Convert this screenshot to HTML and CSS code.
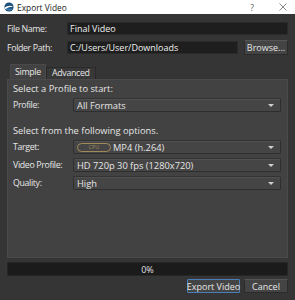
FILE: index.html
```html
<!DOCTYPE html>
<html>
<head>
<meta charset="utf-8">
<link rel="stylesheet" href="styles.css">
</head>
<body>
<div class="window">
  <div class="titlebar">
    <svg class="appicon" width="10" height="10" viewBox="0 0 10 10">
      <circle cx="5" cy="5" r="4.6" fill="#1d4f7a"/>
      <path d="M0.6 5.6 Q5 2.4 9.6 5 Q6 4.3 1.4 7.2 Z" fill="#ffffff"/>
      <path d="M1.4 7.2 Q5 5.7 8.9 7.2 Q5 10 1.4 7.2 Z" fill="#3a7fb8"/>
    </svg>
    <span class="title">Export Video</span>
    <span class="spacer"></span>
    <span class="help">?</span>
    <svg class="close" width="8" height="8" viewBox="0 0 8 8">
      <path d="M0.5 0.5 L7.5 7.5 M7.5 0.5 L0.5 7.5" stroke="#777" stroke-width="0.9"/>
    </svg>
  </div>
  <div class="content">
    <div class="row">
      <span class="label">File Name:</span>
      <div class="field">Final Video</div>
    </div>
    <div class="row row2">
      <span class="label">Folder Path:</span>
      <div class="field">C:/Users/User/Downloads</div>
      <div class="btn browse">Browse...</div>
    </div>
    <div class="tabs">
      <div class="tab active">Simple</div>
      <div class="tab">Advanced</div>
    </div>
    <div class="panel">
      <div class="heading">Select a Profile to start:</div>
      <div class="prow">
        <span class="plabel">Profile:</span>
        <div class="combo"><span class="ctext">All Formats</span><span class="arrow"></span></div>
      </div>
      <div class="heading heading2">Select from the following options.</div>
      <div class="prow">
        <span class="plabel">Target:</span>
        <div class="combo"><span class="badge">CPU</span><span class="ctext">MP4 (h.264)</span><span class="arrow"></span></div>
      </div>
      <div class="prow">
        <span class="plabel">Video Profile:</span>
        <div class="combo"><span class="ctext">HD 720p 30 fps (1280x720)</span><span class="arrow"></span></div>
      </div>
      <div class="prow">
        <span class="plabel">Quality:</span>
        <div class="combo"><span class="ctext">High</span><span class="arrow"></span></div>
      </div>
    </div>
    <div class="progress">0%</div>
    <div class="buttons">
      <div class="btn export">Export Video</div>
      <div class="btn cancel">Cancel</div>
    </div>
  </div>
</div>
</body>
</html>
```
FILE: styles.css
```css
* { box-sizing: border-box; }
html, body { margin: 0; padding: 0; }
body {
  width: 295px;
  height: 300px;
  background: #353535;
  font-family: "Open Sans", "Noto Sans", sans-serif;
  font-size: 9.3px;
  color: #e6e6e6;
  overflow: hidden;
  white-space: nowrap;
}
.window { width: 295px; height: 300px; display: flex; flex-direction: column; }
.titlebar {
  height: 15px;
  background: #ffffff;
  display: flex;
  align-items: center;
  padding: 0 8px 0 4px;
  color: #222;
  font-size: 8.4px;
}
.appicon { margin-right: 3px; }
.spacer { flex: 1; }
.help { color: #555; font-size: 8.5px; margin-right: 25px; }
.close { margin-right: 0; }
.content {
  flex: 1;
  display: flex;
  flex-direction: column;
  padding: 8px 7px 7px 7px;
}
.row { display: flex; align-items: center; height: 13px; }
.row2 { margin-top: 5px; height: 15px; }
.label { width: 60px; color: #e6e6e6; font-size: 8.8px; letter-spacing: -0.35px; }
.field {
  flex: 1;
  height: 13px;
  background: #1e1e1e;
  border: 1px solid #2a2a2a;
  padding: 0 2px;
  line-height: 11px;
  color: #f0f0f0;
  font-size: 9px;
}
.btn {
  height: 15px;
  border: 1px solid #2b2b2b;
  border-top-color: #555;
  background: #444;
  display: flex;
  align-items: center;
  justify-content: center;
  color: #e6e6e6;
  border-radius: 1px;
  font-size: 9px;
}
.browse { width: 44px; margin-left: 6px; }
.tabs { display: flex; align-items: flex-end; margin-top: 9px; padding-left: 3px; height: 15px; }
.tab {
  height: 12px;
  padding: 0 5px;
  background: #383838;
  border: 1px solid #2a2a2a;
  border-bottom: none;
  line-height: 11px;
  color: #e6e6e6;
  font-size: 8.8px;
  letter-spacing: -0.3px;
}
.tab.active {
  height: 15px;
  background: #424242;
  border-color: #4a4a4a;
  line-height: 14px;
  padding: 0 4px;
}
.panel {
  height: 179px;
  background: #424242;
  border: 1px solid #4a4a4a;
  padding: 3px 5px 0 5px;
  display: flex;
  flex-direction: column;
}
.heading { height: 12px; line-height: 12px; }
.heading2 { margin-top: 13px; }
.prow { display: flex; align-items: center; height: 14px; margin-top: 4px; }
.heading + .prow { margin-top: 3px; }
.plabel { width: 60px; font-size: 8.8px; letter-spacing: -0.35px; }
.combo {
  flex: 1;
  height: 14px;
  background: #454545;
  border: 1px solid #2e2e2e;
  border-top-color: #333;
  box-shadow: inset 0 1px 0 #505050;
  display: flex;
  align-items: center;
  padding: 0 6px 0 3px;
  border-radius: 2px;
  margin-right: 1px;
}
.ctext { flex: 1; white-space: nowrap; }
.arrow {
  width: 0; height: 0;
  border-left: 3px solid transparent;
  border-right: 3px solid transparent;
  border-top: 3px solid #cfcfcf;
}
.badge {
  width: 34px;
  height: 9px;
  border: 1px solid #a38a5a;
  border-radius: 5px;
  color: #a38a5a;
  font-size: 5.5px;
  display: flex;
  align-items: center;
  justify-content: center;
  margin-right: 2px;
}
.progress {
  margin-top: 4px;
  height: 14px;
  background: #1b1b1b;
  border: 1px solid #262626;
  border-radius: 1px;
  display: flex;
  align-items: center;
  justify-content: center;
  color: #e0e0e0;
  font-size: 9px;
}
.buttons { display: flex; justify-content: flex-end; margin-top: 3px; }
.export { width: 53px; height: 14px; border: 1px solid #4a7eb8; }
.cancel { width: 44px; height: 14px; margin-left: 4px; }
```
